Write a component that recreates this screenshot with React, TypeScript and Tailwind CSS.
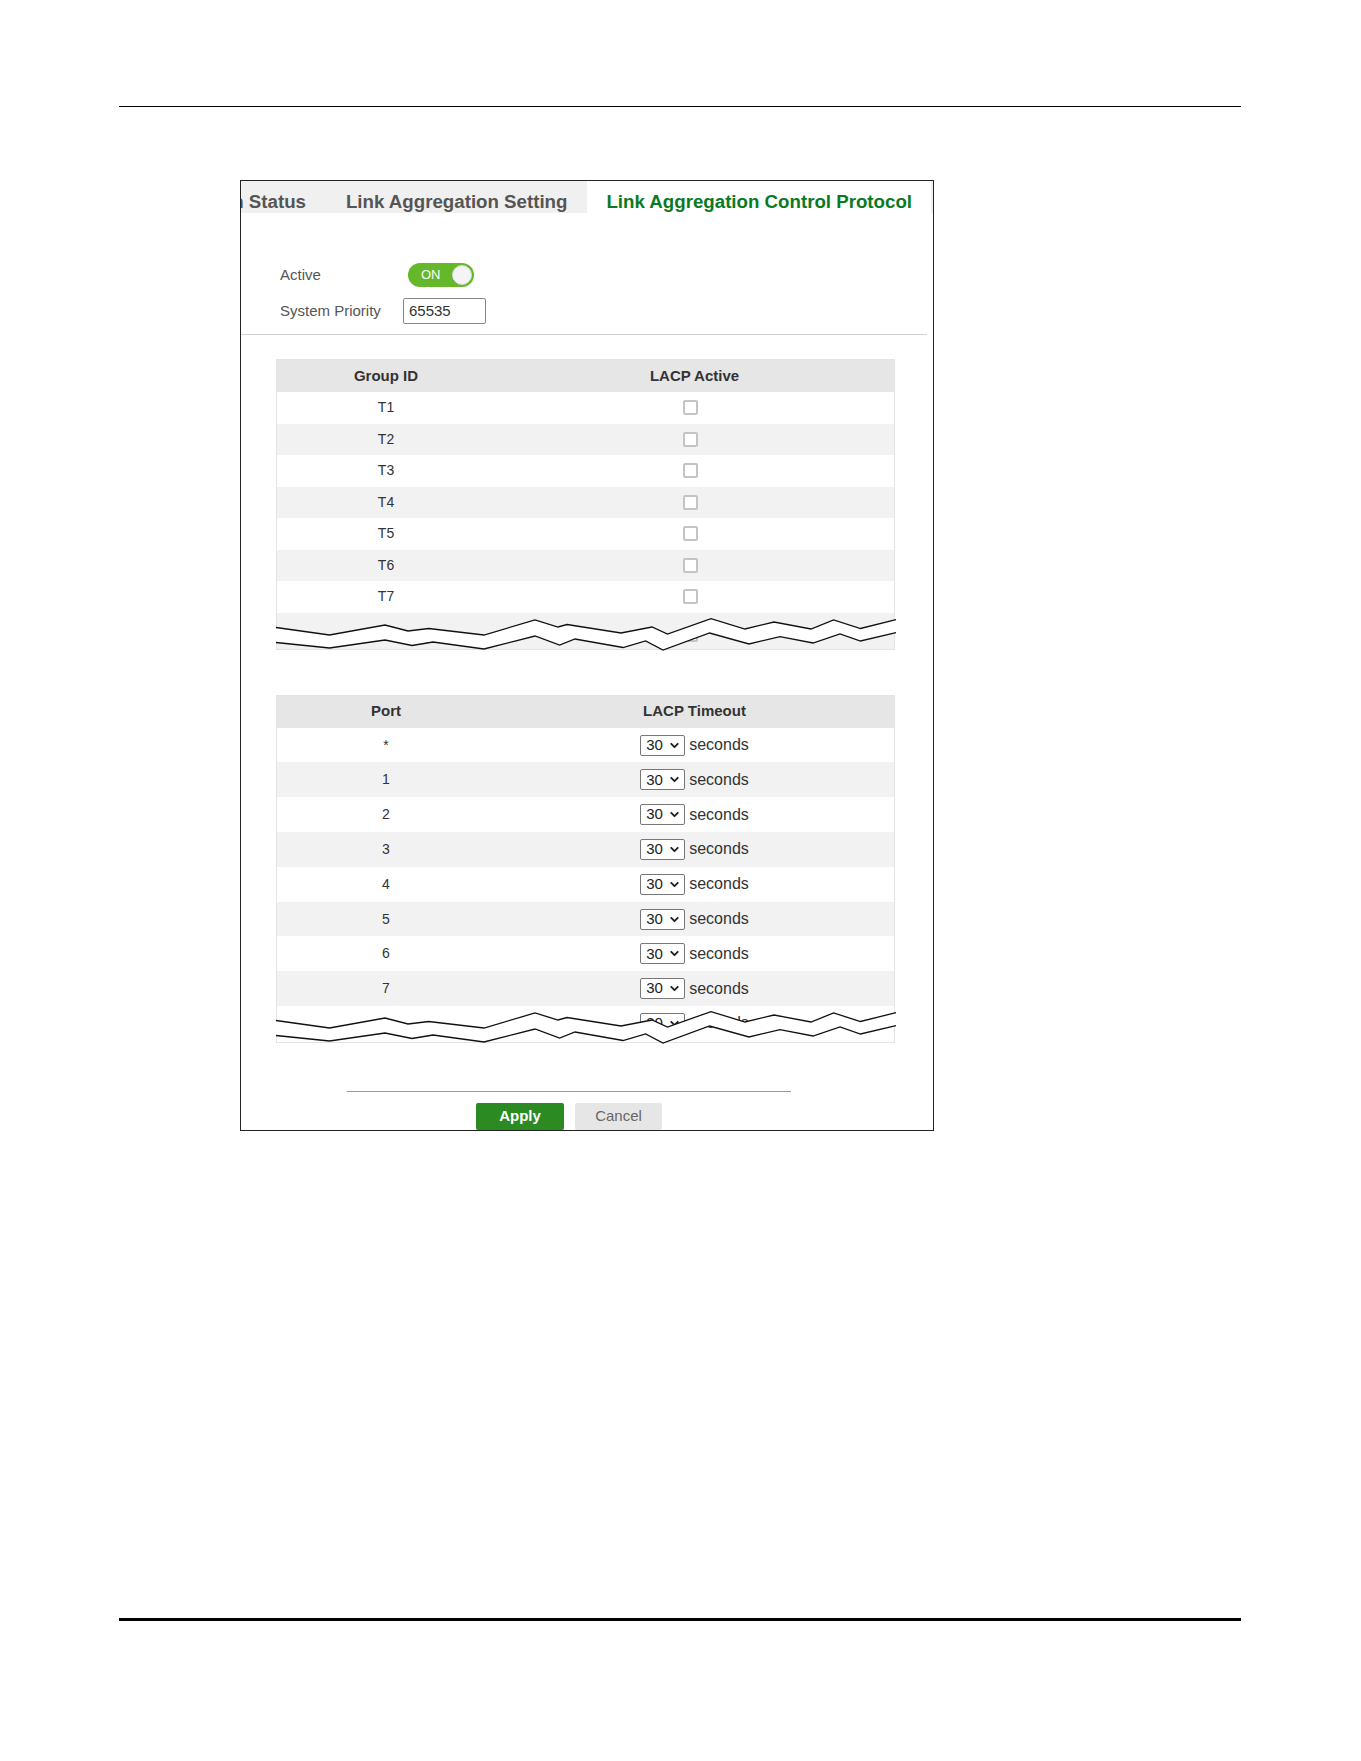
import React from 'react';
import { ChevronDown } from 'lucide-react';

// break mark drawn across the end of a truncated table
const TOP_EDGE: [number, number][] = [
    [-1, 14.5], [52.5, 22], [108, 12], [131, 18], [151.7, 15.5], [207, 22], [258, 7], [281, 14],
    [290, 11.5], [344, 20], [375, 14], [390.5, 21], [434, 5.6], [468, 16], [497, 9], [534, 16],
    [556.6, 7], [583.5, 15.5], [619, 6.6],
];
const BOTTOM_EDGE: [number, number][] = [
    [-1, 29.5], [52.5, 35], [108, 27], [135, 32.5], [156, 29], [207, 36], [258, 23], [282.6, 32],
    [298, 26], [346, 34.5], [368.6, 28], [386, 37], [432.6, 20], [472, 31], [503, 23.6], [536, 30],
    [563, 21], [583.5, 28], [619, 19.7],
];

const pts = (list: [number, number][]) => list.map((p) => p.join(',')).join(' ');

const BreakMark: React.FC = () => (
    <svg
        className="absolute left-0 top-0 overflow-visible pointer-events-none"
        width={619}
        height={36}
        viewBox="0 0 619 36"
    >
        <polygon points={pts([...TOP_EDGE, ...[...BOTTOM_EDGE].reverse()])} fill="#ffffff" />
        <polyline points={pts(TOP_EDGE)} fill="none" stroke="#111111" strokeWidth={1.3} />
        <polyline points={pts(BOTTOM_EDGE)} fill="none" stroke="#111111" strokeWidth={1.3} />
    </svg>
);

const Checkbox: React.FC = () => (
    <span className="block w-[15px] h-[15px] rounded-[2px] border-2 border-[#c4c4c4] bg-white" />
);

const TimeoutSelect: React.FC = () => (
    <div className="flex items-center gap-[4px]">
        <div className="w-[45px] h-[21px] border border-[#777] rounded-[2px] bg-white flex items-center pl-[5px] pr-[3px] text-[15px] text-[#222]">
            <span>30</span>
            <ChevronDown className="ml-auto h-[13px] w-[13px]" strokeWidth={3.5} />
        </div>
        <span className="text-[16px] text-[#333]">seconds</span>
    </div>
);

const groups = ['T1', 'T2', 'T3', 'T4', 'T5', 'T6', 'T7'];
const ports = ['*', '1', '2', '3', '4', '5', '6', '7'];

const App: React.FC = () => {
    return (
        <div className="w-[1361px] h-[1761px] bg-white font-['Liberation_Sans',Arial,sans-serif] text-[#333] flex flex-col">
            <div className="mt-[106px] ml-[119px] w-[1122px] border-t border-black" />

            {/* LACP settings panel */}
            <div className="mt-[73px] ml-[240px] w-[694px] h-[951px] border border-[#222] flex flex-col">
                <div className="h-[35px] bg-[#f0f0f0] flex justify-end overflow-hidden pr-[2px] text-[18.7px] font-bold">
                    <div className="shrink-0 px-[20px] pt-[10px] flex items-center text-[#555]">Link Aggregation Status</div>
                    <div className="shrink-0 px-[20px] pt-[10px] flex items-center text-[#555]">Link Aggregation Setting</div>
                    <div className="shrink-0 px-[19px] pt-[10px] flex items-center bg-white text-[#0a7a22]">Link Aggregation Control Protocol</div>
                </div>

                <div className="pt-[50px] pl-[39px] text-[15px] text-[#555]">
                    <div className="flex items-center h-[24px]">
                        <span className="w-[123px]">Active</span>
                        <div className="ml-[5px] w-[66px] h-[24px] rounded-full bg-[#64b829] flex items-center">
                            <span className="ml-[13px] text-[13px] text-white">ON</span>
                            <span className="ml-auto mr-[2px] w-[20px] h-[20px] rounded-full bg-[#f4f4f4] border border-[#d8d8d8]" />
                        </div>
                    </div>
                    <div className="flex items-center h-[26px] mt-[11px]">
                        <span className="w-[123px]">System Priority</span>
                        <div className="w-[83px] h-[26px] border border-[#888] rounded-[2px] flex items-center pl-[5px] text-[#333]">
                            65535
                        </div>
                    </div>
                </div>

                <div className="mt-[10px] mr-[6px] border-t border-[#cfcfcf]" />

                {/* group table */}
                <div className="mt-[24px] ml-[35px] w-[619px] border border-[#e4e4e4] text-[14px]">
                    <div className="h-[32px] bg-[#e6e6e6] flex items-center font-bold text-[15px] text-[#333]">
                        <div className="w-[218px] text-center">Group ID</div>
                        <div className="flex-1 text-center">LACP Active</div>
                    </div>
                    {groups.map((g, i) => (
                        <div key={g} className={`h-[31.5px] flex items-center ${i % 2 === 0 ? 'bg-white' : 'bg-[#f2f2f2]'}`}>
                            <div className="w-[218px] text-center">{g}</div>
                            <div className="flex-1 flex justify-center pr-[9px]">
                                <Checkbox />
                            </div>
                        </div>
                    ))}
                    <div className="relative h-[36px]">
                        <div className="h-full overflow-hidden bg-[#f2f2f2] flex items-start pt-[14px]">
                            <div className="w-[218px]" />
                            <div className="flex-1 flex justify-center pr-[9px]">
                                <Checkbox />
                            </div>
                        </div>
                        <BreakMark />
                    </div>
                </div>

                {/* port table */}
                <div className="mt-[45px] ml-[35px] w-[619px] border border-[#e4e4e4] text-[14px]">
                    <div className="h-[32px] bg-[#e6e6e6] flex items-center font-bold text-[15px] text-[#333]">
                        <div className="w-[218px] text-center">Port</div>
                        <div className="flex-1 text-center">LACP Timeout</div>
                    </div>
                    {ports.map((p, i) => (
                        <div key={p} className={`h-[34.8px] flex items-center ${i % 2 === 0 ? 'bg-white' : 'bg-[#f2f2f2]'}`}>
                            <div className="w-[218px] text-center">{p}</div>
                            <div className="flex-1 flex justify-center">
                                <TimeoutSelect />
                            </div>
                        </div>
                    ))}
                    <div className="relative h-[36px]">
                        <div className="h-full overflow-hidden bg-white">
                            <div className="h-[34.8px] flex items-center">
                                <div className="w-[218px] text-center">8</div>
                                <div className="flex-1 flex justify-center">
                                    <TimeoutSelect />
                                </div>
                            </div>
                        </div>
                        <BreakMark />
                    </div>
                </div>

                <div className="mt-[48px] ml-[106px] w-[444px] border-t border-[#999]" />
                <div className="mt-[11px] ml-[106px] w-[444px] flex justify-center gap-[11px] text-[15px]">
                    <button className="w-[88px] h-[27px] rounded-[2px] bg-[#2b8a22] text-white font-bold">Apply</button>
                    <button className="w-[87px] h-[27px] rounded-[2px] bg-[#e6e6e6] text-[#666]">Cancel</button>
                </div>
            </div>

            <div className="mt-[487px] ml-[119px] w-[1122px] border-t-[3px] border-black" />
        </div>
    );
};

export default App;
